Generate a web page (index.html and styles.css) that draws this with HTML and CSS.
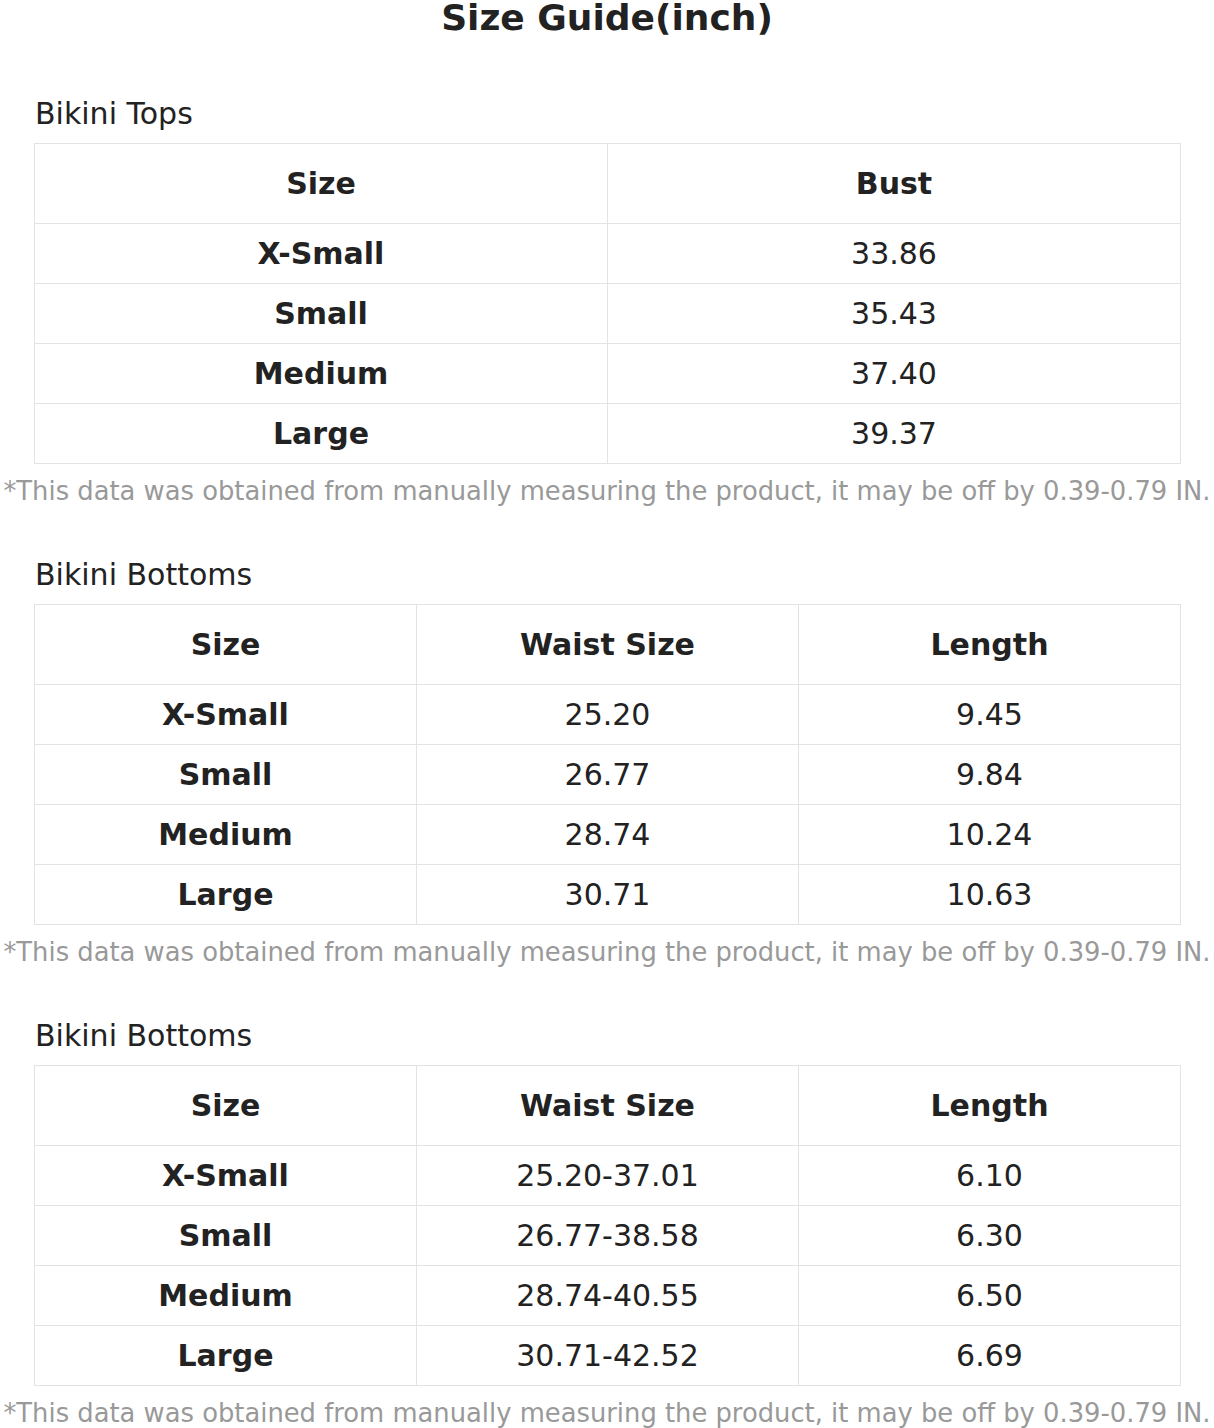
FILE: index.html
```html
<!DOCTYPE html>
<html>
<head>
<meta charset="utf-8">
<link rel="stylesheet" href="styles.css">
</head>
<body>
<div class="page">
  <h1 class="title">Size Guide(inch)</h1>

  <section class="section">
    <h2 class="section-title">Bikini Tops</h2>
    <table class="size-table cols-2">
      <thead>
        <tr><th>Size</th><th>Bust</th></tr>
      </thead>
      <tbody>
        <tr><th>X-Small</th><td>33.86</td></tr>
        <tr><th>Small</th><td>35.43</td></tr>
        <tr><th>Medium</th><td>37.40</td></tr>
        <tr><th>Large</th><td>39.37</td></tr>
      </tbody>
    </table>
    <p class="note">*This data was obtained from manually measuring the product, it may be off by 0.39-0.79 IN.</p>
  </section>

  <section class="section">
    <h2 class="section-title">Bikini Bottoms</h2>
    <table class="size-table cols-3">
      <thead>
        <tr><th>Size</th><th>Waist Size</th><th>Length</th></tr>
      </thead>
      <tbody>
        <tr><th>X-Small</th><td>25.20</td><td>9.45</td></tr>
        <tr><th>Small</th><td>26.77</td><td>9.84</td></tr>
        <tr><th>Medium</th><td>28.74</td><td>10.24</td></tr>
        <tr><th>Large</th><td>30.71</td><td>10.63</td></tr>
      </tbody>
    </table>
    <p class="note">*This data was obtained from manually measuring the product, it may be off by 0.39-0.79 IN.</p>
  </section>

  <section class="section">
    <h2 class="section-title">Bikini Bottoms</h2>
    <table class="size-table cols-3">
      <thead>
        <tr><th>Size</th><th>Waist Size</th><th>Length</th></tr>
      </thead>
      <tbody>
        <tr><th>X-Small</th><td>25.20-37.01</td><td>6.10</td></tr>
        <tr><th>Small</th><td>26.77-38.58</td><td>6.30</td></tr>
        <tr><th>Medium</th><td>28.74-40.55</td><td>6.50</td></tr>
        <tr><th>Large</th><td>30.71-42.52</td><td>6.69</td></tr>
      </tbody>
    </table>
    <p class="note">*This data was obtained from manually measuring the product, it may be off by 0.39-0.79 IN.</p>
  </section>
</div>
</body>
</html>
```

FILE: styles.css
```css
html, body {
  margin: 0;
  padding: 0;
  background: #fff;
}

body {
  font-family: "DejaVu Sans", sans-serif;
  color: #222;
}

.page {
  width: 1214px;
  overflow: hidden;
}

.title {
  margin: 0;
  font-size: 36px;
  line-height: 36px;
  font-weight: bold;
  text-align: center;
  color: #222;
}

.section {
  padding: 0 34px;
}

.section:first-of-type {
  margin-top: 58px;
}

.section + .section {
  margin-top: 46px;
}

.section-title {
  margin: 0 0 9px 1px;
  font-size: 30px;
  line-height: 40px;
  font-weight: normal;
  color: #222;
}

.size-table {
  width: 1147px;
  border-collapse: collapse;
  table-layout: fixed;
  font-size: 30px;
}

.size-table th,
.size-table td {
  border: 1px solid #e3e3e3;
  text-align: center;
  vertical-align: middle;
  padding: 0;
  height: 59px;
  color: #222;
}

.size-table th {
  font-weight: bold;
}

.size-table thead th {
  height: 79px;
}

.size-table td {
  font-weight: normal;
}

.note {
  margin: 9px -34px 0;
  font-size: 25.8px;
  line-height: 36px;
  color: #999;
  text-align: center;
  white-space: nowrap;
}
```
